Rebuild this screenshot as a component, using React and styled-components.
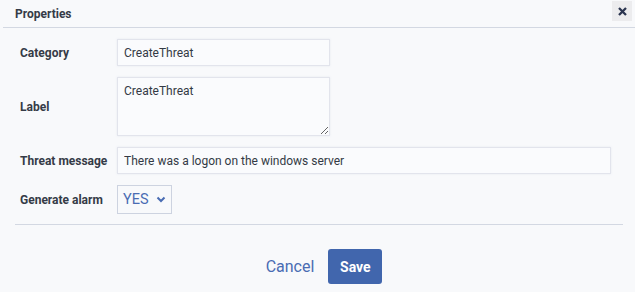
import React from "react";
import styled, { createGlobalStyle } from "styled-components";

const GlobalStyle = createGlobalStyle`
  html, body {
    margin: 0;
    padding: 0;
    background: #f8f9fb;
  }
  body {
    font-family: Roboto, "Liberation Sans", Arial, sans-serif;
    color: #333a45;
  }
`;

const Dialog = styled.div`
  width: 635px;
  height: 292px;
  display: flex;
  flex-direction: column;
  background: #f8f9fb;
`;

const Header = styled.div`
  height: 28px;
  margin-left: 3px;
  display: flex;
  align-items: flex-start;
  justify-content: space-between;
  border-bottom: 1px solid #d3d8e2;
  box-sizing: border-box;
  padding: 0 3px 0 12px;
`;

const Title = styled.div`
  font-size: 12px;
  font-weight: 700;
  color: #353b47;
  padding-top: 7px;
`;

const CloseButton = styled.button`
  width: 20px;
  height: 20px;
  margin-top: 1px;
  border: none;
  padding: 0;
  background: #ececee;
  display: flex;
  align-items: center;
  justify-content: center;
  cursor: pointer;
`;

const Body = styled.div`
  margin: 0 12px 0 15px;
  padding: 11px 12px 10px 5px;
  display: flex;
  flex-direction: column;
  gap: 11px;
  border-bottom: 1px solid #d3d8e2;
`;

const Row = styled.div`
  display: flex;
  align-items: center;
`;

const Label = styled.label`
  width: 97px;
  flex-shrink: 0;
  font-size: 12px;
  font-weight: 700;
  color: #353b47;
`;

const fieldBase = `
  box-sizing: border-box;
  border: 1px solid #e2e4ec;
  box-shadow: 0 0 2px rgba(200, 205, 220, 0.35);
  background: #fafbfd;
  font-family: Roboto, "Liberation Sans", Arial, sans-serif;
  font-size: 12px;
  color: #333a45;
  padding: 0 6px;
  outline: none;
`;

const TextInput = styled.input`
  ${fieldBase}
  height: 27px;
  width: ${(p) => (p.$wide ? "494px" : "213px")};
`;

const TextArea = styled.textarea`
  ${fieldBase}
  height: 59px;
  width: 213px;
  padding: 6px 6px;
  resize: both;
  line-height: 15px;
`;

const SelectBox = styled.div`
  box-sizing: border-box;
  height: 29px;
  width: 55px;
  border: 1px solid #cdd3e0;
  display: flex;
  align-items: center;
  justify-content: space-between;
  padding: 0 5px 0 5px;
  color: #4a6cb3;
  font-size: 14.5px;
`;

const Footer = styled.div`
  display: flex;
  justify-content: center;
  align-items: center;
  gap: 14px;
  padding: 24px 0 0 13px;
`;

const CancelButton = styled.button`
  border: none;
  background: none;
  padding: 0;
  font-family: Roboto, "Liberation Sans", Arial, sans-serif;
  font-size: 16px;
  color: #4a6cb3;
  cursor: pointer;
`;

const SaveButton = styled.button`
  width: 54px;
  height: 35px;
  border: none;
  border-radius: 3px;
  background: #4166ad;
  color: #fff;
  font-family: Roboto, "Liberation Sans", Arial, sans-serif;
  font-size: 14px;
  font-weight: 700;
  cursor: pointer;
`;

export default function App() {
  return (
    <>
      <GlobalStyle />
      <Dialog>
        <Header>
          <Title>Properties</Title>
          <CloseButton aria-label="Close">
            <svg width="11" height="11" viewBox="0 0 11 11">
              <path d="M2 2 L9 9 M9 2 L2 9" stroke="#2b3550" strokeWidth="2.3" />
            </svg>
          </CloseButton>
        </Header>
        <Body>
          <Row>
            <Label>Category</Label>
            <TextInput defaultValue="CreateThreat" />
          </Row>
          <Row>
            <Label>Label</Label>
            <TextArea defaultValue="CreateThreat" />
          </Row>
          <Row>
            <Label>Threat message</Label>
            <TextInput $wide defaultValue="There was a logon on the windows server" />
          </Row>
          <Row>
            <Label>Generate alarm</Label>
            <SelectBox>
              YES
              <svg width="10" height="7" viewBox="0 0 10 7">
                <path d="M1.5 1.5 L5 5 L8.5 1.5" fill="none" stroke="#4a6cb3" strokeWidth="2" />
              </svg>
            </SelectBox>
          </Row>
        </Body>
        <Footer>
          <CancelButton>Cancel</CancelButton>
          <SaveButton>Save</SaveButton>
        </Footer>
      </Dialog>
    </>
  );
}
